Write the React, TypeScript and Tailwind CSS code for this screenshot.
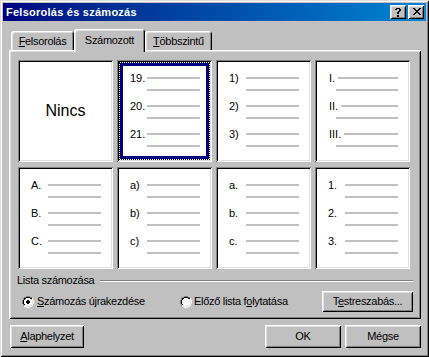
import React from "react";

const BEVEL_OUT =
  "shadow-[inset_1px_1px_0_#fff,inset_-1px_-1px_0_#000,inset_2px_2px_0_#dfdfdf,inset_-2px_-2px_0_#808080]";
const BEVEL_IN =
  "shadow-[inset_1px_1px_0_#808080,inset_-1px_-1px_0_#fff,inset_2px_2px_0_#000,inset_-2px_-2px_0_#dfdfdf]";

function Pix({ rows, colors }: { rows: string[]; colors: Record<string, string> }) {
  const h = rows.length;
  const w = rows[0].length;
  const rects: React.ReactNode[] = [];
  rows.forEach((r, y) =>
    r.split("").forEach((c, x) => {
      if (colors[c]) rects.push(<rect key={`${x}-${y}`} x={x} y={y} width={1} height={1} fill={colors[c]} />);
    })
  );
  return (
    <svg width={w} height={h} viewBox={`0 0 ${w} ${h}`} shapeRendering="crispEdges" className="block">
      {rects}
    </svg>
  );
}

const CLOSE = ["XX....XX", ".XX..XX.", "..XXXX..", "...XX...", "..XXXX..", ".XX..XX.", "XX....XX"];
const HELP = [".XXXX.", "XX..XX", "....XX", "...XX.", "..XX..", "..XX..", "......", "..XX..", "..XX.."];

const RADIO = [
  "....GGGG....",
  "..GGKKKKGG..",
  ".GKKWWWWKKW.",
  ".GKWWWWWWLW.",
  "GKWWWWWWWWLW",
  "GKWWWWWWWWLW",
  "GKWWWWWWWWLW",
  "GKWWWWWWWWLW",
  ".GKWWWWWWLW.",
  ".GLLWWWWLLW.",
  "..WWLLLLWW..",
  "....WWWW....",
];

function Radio({ checked }: { checked: boolean }) {
  const rows = RADIO.map((r, y) =>
    r
      .split("")
      .map((c, x) => {
        if (!checked) return c;
        const inDot = (y === 4 || y === 7 ? x >= 5 && x <= 6 : y >= 5 && y <= 6 ? x >= 4 && x <= 7 : false);
        return inDot ? "D" : c;
      })
      .join("")
  );
  return <Pix rows={rows} colors={{ G: "#808080", K: "#000", W: "#fff", L: "#dfdfdf", D: "#000" }} />;
}

function TitleBtn({ kind }: { kind: "help" | "close" }) {
  return (
    <div className={`w-[16px] h-[14px] bg-[#c0c0c0] flex items-center justify-center ${BEVEL_OUT}`}>
      {kind === "close" ? (
        <div className="pl-[1px] pb-[1px]">
          <Pix rows={CLOSE} colors={{ X: "#000" }} />
        </div>
      ) : (
        <div className="pr-[1px]">
          <Pix rows={HELP} colors={{ X: "#000" }} />
        </div>
      )}
    </div>
  );
}

function Btn({ className, children }: { className: string; children: React.ReactNode }) {
  return (
    <div className={`bg-[#c0c0c0] flex items-center justify-center ${BEVEL_OUT} ${className}`}>{children}</div>
  );
}

type Cell = { labels: string[] | null; roman?: boolean; selected?: boolean };

const CELLS: Cell[] = [
  { labels: null },
  { labels: ["19.", "20.", "21."], selected: true },
  { labels: ["1)", "2)", "3)"] },
  { labels: ["I.", "II.", "III."], roman: true },
  { labels: ["A.", "B.", "C."] },
  { labels: ["a)", "b)", "c)"] },
  { labels: ["a.", "b.", "c."] },
  { labels: ["1.", "2.", "3."] },
];

function ListCell({ cell }: { cell: Cell }) {
  return (
    <div className={`relative bg-white h-[102px] ${BEVEL_IN}`}>
      {cell.labels === null ? (
        <div className="h-full flex items-center justify-center text-[16px] tracking-normal">Nincs</div>
      ) : (
        <div className={`flex flex-col pt-[12px] pr-[12px] ${cell.roman ? "pl-[14px]" : "pl-[13px]"}`}>
          {cell.labels.map((l) => (
            <div key={l} className="h-[28px] flex flex-col">
              <div className="h-[12px] flex items-center">
                <span className={`leading-none tracking-normal text-[11px] ${cell.roman ? "mr-[3px]" : "min-w-[15px] mr-[2px]"}`}>
                  {l}
                </span>
                <div className="flex-1 h-[2px] bg-[#c0c0c0]" />
              </div>
              <div className={`mt-[5px] h-[2px] bg-[#c0c0c0] ${cell.roman ? "ml-[7px]" : "ml-[17px]"}`} />
            </div>
          ))}
        </div>
      )}
      {cell.selected && (
        <div className="absolute inset-[2px] border border-dotted border-black">
          <div className="absolute inset-0 border-[3px] border-[#000080]" />
        </div>
      )}
    </div>
  );
}

const TAB_SHADOW =
  "shadow-[inset_1px_1px_0_#fff,inset_-1px_0_0_#000,inset_2px_2px_0_#dfdfdf,inset_-2px_0_0_#808080]";

export default function App() {
  return (
    <div
      className={`w-[429px] h-[357px] bg-[#c0c0c0] p-[3px] flex flex-col font-['Liberation_Sans',Arial,sans-serif] text-[11px] text-black tracking-[-0.3px] shadow-[inset_1px_1px_0_#dfdfdf,inset_-1px_-1px_0_#000,inset_2px_2px_0_#fff,inset_-2px_-2px_0_#808080]`}
    >
      {/* Title bar */}
      <div className="h-[18px] flex items-center bg-gradient-to-r from-[#000080] to-[#1084d0] pl-[3px] pr-[2px]">
        <span className="flex-1 text-white font-bold text-[11px] tracking-[0.25px] leading-none">
          Felsorolás és számozás
        </span>
        <div className="flex gap-[2px]">
          <TitleBtn kind="help" />
          <TitleBtn kind="close" />
        </div>
      </div>

      {/* Body */}
      <div className="flex flex-col pl-[6px] pr-[5px]">
        {/* Tabs */}
        <div className="mt-[8px] h-[21px] flex items-start pl-[2px]">
          <div className={`mt-[2px] h-[19px] w-[63px] rounded-t-[3px] flex items-center justify-center pt-[1px] ${TAB_SHADOW}`}>
            <span>
              <u>F</u>elsorolás
            </span>
          </div>
          <div
            className={`relative z-10 h-[23px] w-[71px] rounded-t-[3px] bg-[#c0c0c0] flex justify-center pt-[5px] ${TAB_SHADOW}`}
          >
            <span className="leading-[13px]">Számozott</span>
          </div>
          <div className={`mt-[2px] h-[19px] w-[67px] rounded-t-[3px] flex items-center justify-center pt-[1px] ${TAB_SHADOW}`}>
            <span>
              <u>T</u>öbbszintű
            </span>
          </div>
        </div>

        {/* Panel */}
        <div className={`h-[269px] flex flex-col pt-[10px] pl-[8px] pr-[8px] ${BEVEL_OUT}`}>
          <div className="ml-[1px] grid grid-cols-[repeat(4,95px)] auto-rows-[102px] gap-x-[4px] gap-y-[5px]">
            {CELLS.map((c, i) => (
              <ListCell key={i} cell={c} />
            ))}
          </div>

          <div className="mt-[5px] h-[13px] flex items-center">
            <span className="leading-none">Lista számozása</span>
            <div className="flex-1 ml-[6px] flex flex-col">
              <div className="h-[1px] bg-[#808080]" />
              <div className="h-[1px] bg-white" />
            </div>
          </div>

          <div className="mt-[4px] h-[21px] flex items-center pl-[5px]">
            <div className="w-[158px] flex items-center gap-[3px]">
              <Radio checked />
              <span>
                <u>S</u>zámozás újrakezdése
              </span>
            </div>
            <div className="flex items-center gap-[2px]">
              <Radio checked={false} />
              <span>
                Előző lista f<u>o</u>lytatása
              </span>
            </div>
            <Btn className="ml-auto w-[91px] h-[21px]">
              <span>
                T<u>e</u>streszabás...
              </span>
            </Btn>
          </div>
        </div>

        {/* Bottom buttons */}
        <div className="mt-[6px] h-[23px] flex items-center">
          <Btn className="ml-[1px] w-[74px] h-[23px]">
            <span>
              <u>A</u>laphelyzet
            </span>
          </Btn>
          <Btn className="ml-auto w-[76px] h-[23px]">OK</Btn>
          <Btn className="ml-[4px] w-[76px] h-[23px]">Mégse</Btn>
        </div>
      </div>
    </div>
  );
}
